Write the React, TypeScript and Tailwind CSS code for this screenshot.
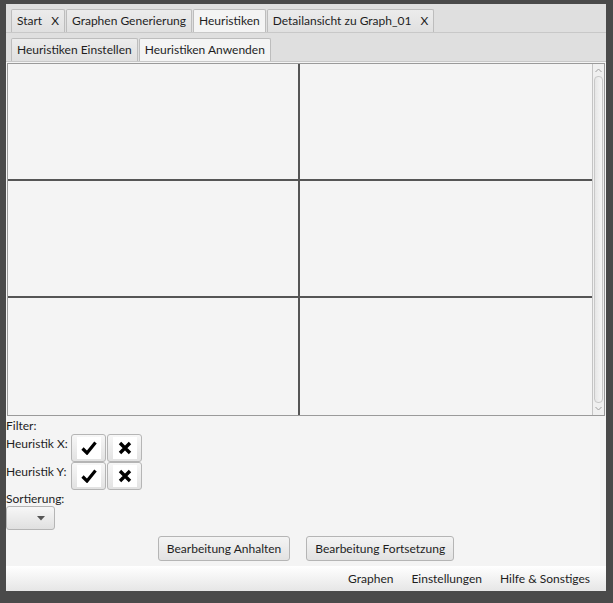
import { useState } from "react";

type Tab = { label: string; closable?: boolean };

const mainTabs: Tab[] = [
  { label: "Start", closable: true },
  { label: "Graphen Generierung" },
  { label: "Heuristiken" },
  { label: "Detailansicht zu Graph_01", closable: true },
];

const subTabs: Tab[] = [{ label: "Heuristiken Einstellen" }, { label: "Heuristiken Anwenden" }];

function TabStrip({ tabs, active, onSelect }: { tabs: Tab[]; active: number; onSelect: (i: number) => void }) {
  return (
    <div className="flex h-[29px] items-end gap-[1px] border-b border-[#c8c8c8] bg-[#dfdfdf] pl-[5px]">
      {tabs.map((t, i) => (
        <button
          key={t.label}
          onClick={() => onSelect(i)}
          className={`flex h-[23px] items-center gap-[9px] rounded-t-[2px] border border-b-0 border-[#bdbdbd] px-[5px] text-[12px] leading-none text-[#1e1e1e] ${
            i === active ? "bg-[#f4f4f4]" : "bg-gradient-to-b from-[#ececec] to-[#e0e0e0]"
          }`}
        >
          <span>{t.label}</span>
          {t.closable && <span>X</span>}
        </button>
      ))}
    </div>
  );
}

function ToggleButton({ kind }: { kind: "ok" | "no" }) {
  return (
    <button className="flex h-[28px] w-[35px] items-center justify-center rounded-[3px] border border-[#b5b5b5] bg-gradient-to-b from-[#f7f7f7] to-[#e2e2e2]">
      <span className="flex h-[22px] w-[24px] items-center justify-center bg-white">
        {kind === "ok" ? (
          <svg width="16" height="14" viewBox="0 0 16 14">
            <path d="M1.5 7.5 L6 12 L14.5 1.5" fill="none" stroke="#000" strokeWidth="3.2" strokeLinejoin="miter" />
          </svg>
        ) : (
          <svg width="14" height="14" viewBox="0 0 14 14">
            <path d="M2 2 L12 12 M12 2 L2 12" fill="none" stroke="#000" strokeWidth="3.4" />
          </svg>
        )}
      </span>
    </button>
  );
}

export default function App() {
  const [mainTab, setMainTab] = useState(2);
  const [subTab, setSubTab] = useState(1);

  return (
    <div className="h-[603px] w-[613px] bg-[#4a4a4a] pl-[6px] pr-[7px] pt-[4px] font-['Lato','Noto_Sans',sans-serif] text-[#1e1e1e]">
      <div className="flex h-[587px] flex-col bg-[#f4f4f4]">
        <TabStrip tabs={mainTabs} active={mainTab} onSelect={setMainTab} />
        <TabStrip tabs={subTabs} active={subTab} onSelect={setSubTab} />

        {/* graph grid + scrollbar */}
        <div className="mx-[1px] mt-[1px] flex h-[353px] border border-[#9a9a9a] bg-[#f4f4f4]">
          <div className="grid flex-1 grid-cols-2 grid-rows-3 border-r border-[#c4c4c4]">
            {Array.from({ length: 6 }).map((_, i) => (
              <div
                key={i}
                className={`border-[#555] ${i % 2 === 0 ? "border-r-2" : ""} ${i < 4 ? "border-b-2" : ""}`}
              />
            ))}
          </div>
          <div className="flex w-[11px] flex-col items-center bg-[#f0f0f0]">
            <svg width="9" height="9" viewBox="0 0 9 9" className="mt-[2px]">
              <path d="M1.5 6 L4.5 3 L7.5 6" fill="none" stroke="#a0a0a0" strokeWidth="1" />
            </svg>
            <div className="my-[1px] w-[9px] flex-1 rounded-[4px] border border-[#c8c8c8] bg-gradient-to-r from-[#e6e6e6] to-[#f6f6f6]" />
            <svg width="9" height="9" viewBox="0 0 9 9" className="mb-[2px]">
              <path d="M1.5 3 L4.5 6 L7.5 3" fill="none" stroke="#a0a0a0" strokeWidth="1" />
            </svg>
          </div>
        </div>

        {/* filter section */}
        <div className="flex flex-col text-[12px] leading-[15px]">
          <div className="mt-[2px]">Filter:</div>
          <div className="mt-[1px] flex items-start">
            <span className="mt-[2px] w-[65px] whitespace-nowrap">Heuristik X:</span>
            <ToggleButton kind="ok" />
            <div className="w-[1px]" />
            <ToggleButton kind="no" />
          </div>
          <div className="flex items-start">
            <span className="mt-[2px] w-[65px] whitespace-nowrap">Heuristik Y:</span>
            <ToggleButton kind="ok" />
            <div className="w-[1px]" />
            <ToggleButton kind="no" />
          </div>
          <div className="mt-[1px]">Sortierung:</div>
          <button className="flex h-[24px] w-[49px] items-center justify-end rounded-[3px] border border-[#b5b5b5] bg-gradient-to-b from-[#f7f7f7] to-[#e0e0e0] pr-[9px]">
            <svg width="8" height="5" viewBox="0 0 8 5">
              <path d="M0 0 L8 0 L4 4.5 Z" fill="#555" />
            </svg>
          </button>
        </div>

        {/* action buttons */}
        <div className="mt-[6px] flex justify-center gap-[16px] text-[12px]">
          <button className="h-[25px] rounded-[3px] border border-[#b5b5b5] bg-gradient-to-b from-[#f4f4f4] to-[#e2e2e2] px-[8px] leading-none">
            Bearbeitung Anhalten
          </button>
          <button className="h-[25px] rounded-[3px] border border-[#b5b5b5] bg-gradient-to-b from-[#f4f4f4] to-[#e2e2e2] px-[8px] leading-none">
            Bearbeitung Fortsetzung
          </button>
        </div>

        {/* bottom menu bar */}
        <div className="mt-auto flex h-[25px] items-center justify-end gap-[18px] bg-gradient-to-b from-[#ffffff] to-[#e6e6e6] pr-[16px] text-[12px] leading-none">
          <span>Graphen</span>
          <span>Einstellungen</span>
          <span>Hilfe &amp; Sonstiges</span>
        </div>
      </div>
    </div>
  );
}
